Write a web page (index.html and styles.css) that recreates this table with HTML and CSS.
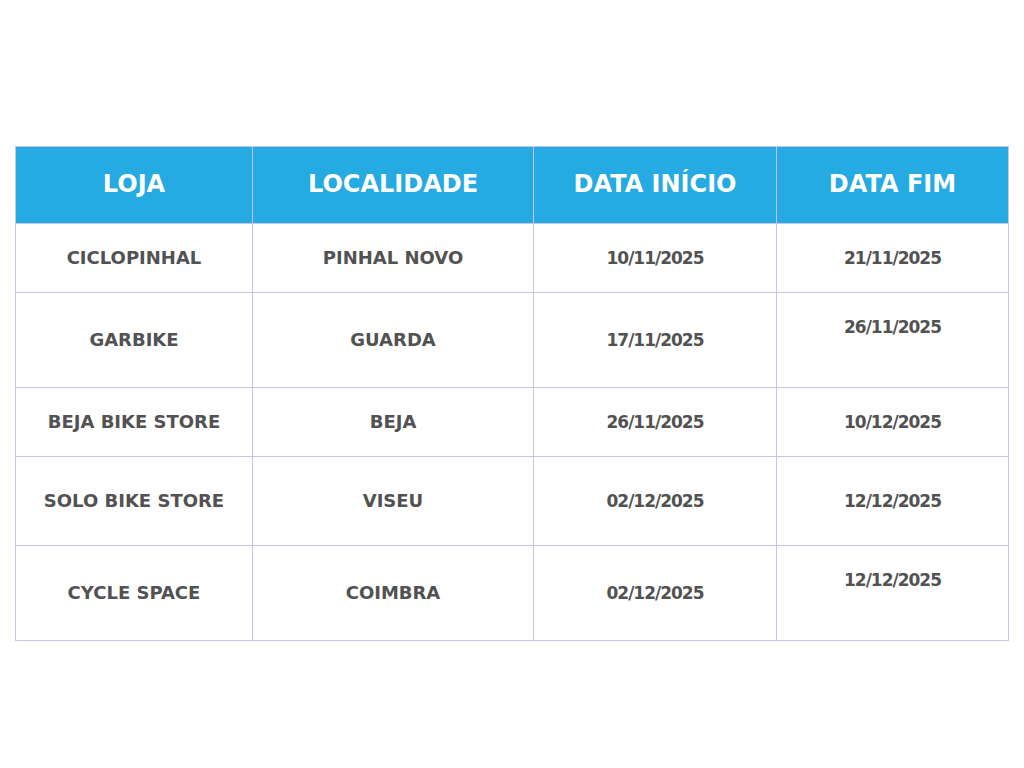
FILE: index.html
```html
<!DOCTYPE html>
<html lang="pt">
<head>
<meta charset="utf-8">
<link rel="stylesheet" href="styles.css">
</head>
<body>
<main class="page">
  <table class="schedule">
    <colgroup>
      <col class="c1"><col class="c2"><col class="c3"><col class="c4">
    </colgroup>
    <thead>
      <tr class="head">
        <th>LOJA</th><th>LOCALIDADE</th><th>DATA INÍCIO</th><th>DATA FIM</th>
      </tr>
    </thead>
    <tbody>
      <tr class="r1"><td>CICLOPINHAL</td><td>PINHAL NOVO</td><td class="date">10/11/2025</td><td class="date">21/11/2025</td></tr>
      <tr class="r2"><td>GARBIKE</td><td>GUARDA</td><td class="date">17/11/2025</td><td class="date top">26/11/2025</td></tr>
      <tr class="r3"><td>BEJA BIKE STORE</td><td>BEJA</td><td class="date">26/11/2025</td><td class="date">10/12/2025</td></tr>
      <tr class="r4"><td>SOLO BIKE STORE</td><td>VISEU</td><td class="date">02/12/2025</td><td class="date">12/12/2025</td></tr>
      <tr class="r5"><td>CYCLE SPACE</td><td>COIMBRA</td><td class="date">02/12/2025</td><td class="date top">12/12/2025</td></tr>
    </tbody>
  </table>
</main>
</body>
</html>
```

FILE: styles.css
```css
html, body {
  margin: 0;
  padding: 0;
  background: #ffffff;
}
.page {
  padding: 146px 16px 0 15px;
}
.schedule {
  width: 993px;
  border-collapse: collapse;
  table-layout: fixed;
  font-family: "DejaVu Sans", "Open Sans", sans-serif;
  font-weight: bold;
  text-align: center;
}
.c1 { width: 237px; }
.c2 { width: 281px; }
.c3 { width: 243px; }
.c4 { width: 232px; }
.schedule th,
.schedule td {
  border: 1px solid #c9c2ee;
  padding: 0;
  vertical-align: middle;
}
.schedule th {
  background: #25aae1;
  color: #ffffff;
  font-size: 24px;
  height: 73px;
  padding-bottom: 3px;
}
.schedule td {
  color: #525252;
  font-size: 18px;
  padding-bottom: 2px;
}
.schedule td.date {
  font-size: 17px;
  letter-spacing: -1px;
  padding-top: 1px;
  padding-bottom: 1px;
}
.r1 td { height: 66px; }
.r2 td { height: 92px; }
.r3 td { height: 66px; }
.r4 td { height: 86px; }
.r5 td { height: 92px; }
.schedule td.top {
  vertical-align: top;
  padding-top: 24px;
  height: auto;
}
```
